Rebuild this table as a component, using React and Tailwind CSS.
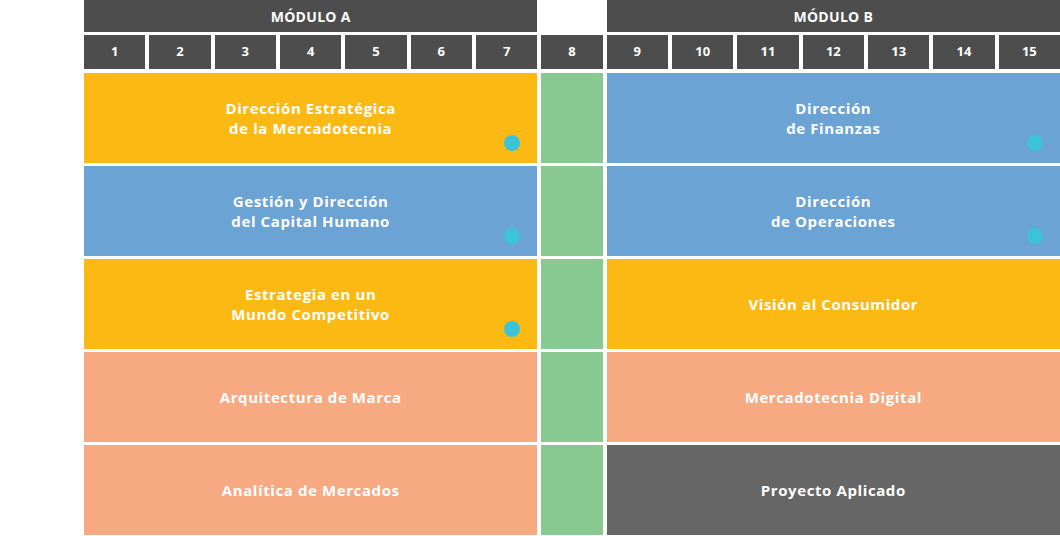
import React from 'react';

const nums = Array.from({ length: 15 }, (_, i) => i + 1);

const rows = [
  {
    a: { text: ['Dirección Estratégica', 'de la Mercadotecnia'], color: 'bg-[#fdb913]', dot: true },
    b: { text: ['Dirección', 'de Finanzas'], color: 'bg-[#6ca3d5]', dot: true },
  },
  {
    a: { text: ['Gestión y Dirección', 'del Capital Humano'], color: 'bg-[#6ca3d5]', dot: true },
    b: { text: ['Dirección', 'de Operaciones'], color: 'bg-[#6ca3d5]', dot: true },
  },
  {
    a: { text: ['Estrategia en un', 'Mundo Competitivo'], color: 'bg-[#fdb913]', dot: true },
    b: { text: ['Visión al Consumidor'], color: 'bg-[#fdb913]' },
  },
  {
    a: { text: ['Arquitectura de Marca'], color: 'bg-[#f7a981]' },
    b: { text: ['Mercadotecnia Digital'], color: 'bg-[#f7a981]' },
  },
  {
    a: { text: ['Analítica de Mercados'], color: 'bg-[#f7a981]' },
    b: { text: ['Proyecto Aplicado'], color: 'bg-[#666666]' },
  },
];

function Course({ item, span }) {
  return (
    <div className={`${span} ${item.color} relative flex flex-col items-center justify-center text-white font-bold text-[15px] tracking-[0.6px] leading-[20px] text-center`}>
      {item.text.map((t) => (
        <span key={t}>{t}</span>
      ))}
      {item.dot && (
        <span className="absolute right-[17px] bottom-[12px] w-4 h-4 rounded-full bg-[#3cc3d8]" />
      )}
    </div>
  );
}

export default function App() {
  return (
    <div className="w-[1060px] h-[536px] overflow-hidden bg-white font-['Open_Sans',sans-serif]">
      <div className="ml-[84px] w-[976px]">
        <div className="grid grid-cols-15 gap-x-[4px] h-[32px]">
          <div className="col-span-7 bg-[#4d4d4d] flex items-center justify-center text-white font-bold text-[14px] tracking-[0.3px]">
            MÓDULO A
          </div>
          <div />
          <div className="col-span-7 bg-[#4d4d4d] flex items-center justify-center text-white font-bold text-[14px] tracking-[0.3px]">
            MÓDULO B
          </div>
        </div>

        <div className="grid grid-cols-15 gap-x-[4px] h-[34px] mt-[3px]">
          {nums.map((n) => (
            <div key={n} className="bg-[#4d4d4d] flex items-center justify-center text-white font-bold text-[13px]">
              {n}
            </div>
          ))}
        </div>

        <div className="grid grid-cols-15 gap-x-[4px] gap-y-[3px] auto-rows-[90px] mt-[4px]">
          {rows.map((r, i) => (
            <React.Fragment key={i}>
              <Course item={r.a} span="col-span-7" />
              <div className="bg-[#88c991]" />
              <Course item={r.b} span="col-span-7" />
            </React.Fragment>
          ))}
        </div>
      </div>
    </div>
  );
}
